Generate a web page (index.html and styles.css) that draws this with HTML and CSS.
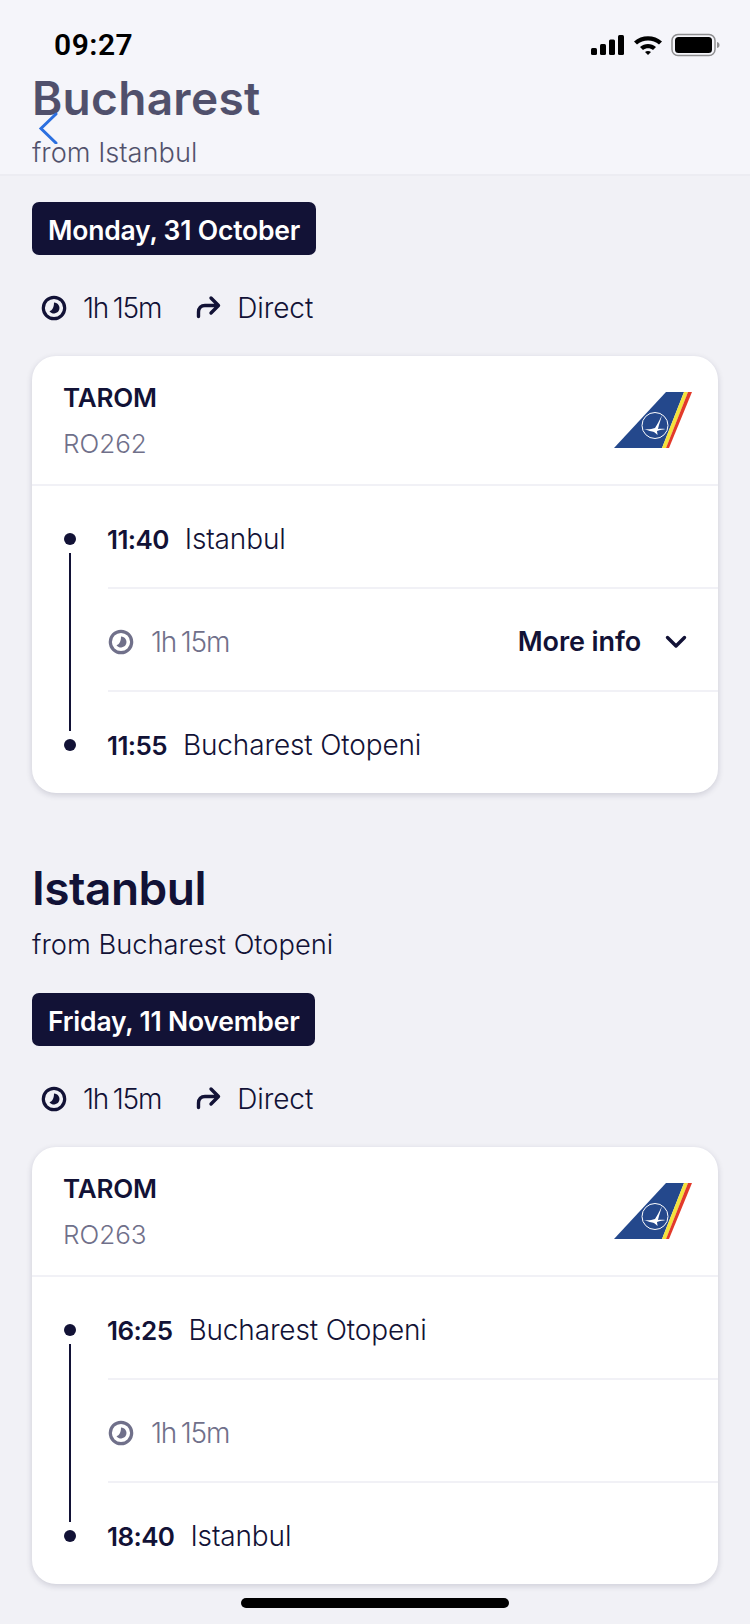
FILE: index.html
```html
<!DOCTYPE html>
<html lang="en">
<head>
<meta charset="utf-8">
<title>Flight details</title>
<link rel="stylesheet" href="styles.css">
</head>
<body>
<div class="screen">
  <header class="top">
    <div class="status">
      <span class="clock">09:27</span>
      <span class="status-icons">
        <svg width="34" height="22" viewBox="0 0 34 22"><rect x="0" y="14" width="6" height="7" rx="1.5"/><rect x="9" y="10" width="6" height="11" rx="1.5"/><rect x="18" y="5.500" width="6" height="15.500" rx="1.500"/><rect x="27" y="1" width="6" height="20" rx="1.500"/></svg>
        <svg width="30" height="22" viewBox="0 0 30 22"><path d="M1 7.500C8.500 .5 21.500 .5 29 7.500L26 10.500C20 5 10 5 4 10.500Z"/><path d="M7 13C11.500 9 18.500 9 23 13L20 16C17 13.500 13 13.500 10 16Z"/><path d="M12 18C13.800 16.600 16.200 16.600 18 18L15 21Z"/></svg>
        <svg width="49" height="24" viewBox="0 0 49 24"><rect x="1" y="1.500" width="43" height="21" rx="6" fill="none" stroke="#8e8e90" stroke-width="1.500"/><rect x="4" y="4" width="37" height="16" rx="3.500"/><path d="M46 9c2 .5 2.500 1.500 2.500 3s-.5 2.500-2.500 3z" fill="#8e8e90"/></svg>
      </span>
    </div>
    <svg class="back" width="20" height="32" viewBox="0 0 20 32"><path d="M18 2 3 16.500 18 31" fill="none" stroke="#2b6fe0" stroke-width="3" stroke-linecap="round"/></svg>
    <div class="top-title">
      <h1>Bucharest</h1>
      <p>from Istanbul</p>
    </div>
  </header>

  <main class="content">
    <section class="leg leg-first">
      <div class="date">Monday, 31 October</div>
      <div class="meta">
        <span class="meta-item">
          <svg width="26" height="26" viewBox="0 0 26 26"><use href="#clock-art"/></svg>
          <span class="dur">1h 15m</span>
        </span>
        <span class="meta-item">
          <svg width="26" height="26" viewBox="0 0 26 26"><use href="#turn-art"/></svg>
          Direct
        </span>
      </div>
      <article class="card">
        <div class="card-head">
          <div>
            <div class="airline">TAROM</div>
            <div class="flight-no">RO262</div>
          </div>
          <svg class="tail" width="78" height="56" viewBox="0 0 78 56"><use href="#tail-art"/></svg>
        </div>
        <div class="route">
          <div class="row stop"><span class="dot"></span><span class="line"></span><b>11:40</b><span>Istanbul</span></div>
          <div class="row mid">
            <svg width="26" height="26" viewBox="0 0 26 26"><use href="#clock-art"/></svg>
            <span class="dur mid-time">1h 15m</span>
            <span class="more">More info
              <svg width="22" height="14" viewBox="0 0 22 14"><path d="M2.500 2.500 11 11 19.500 2.500" fill="none" stroke="currentColor" stroke-width="3.400" stroke-linecap="round" stroke-linejoin="round"/></svg>
            </span>
          </div>
          <div class="row stop"><span class="dot"></span><b>11:55</b><span>Bucharest Otopeni</span></div>
        </div>
      </article>
    </section>

    <section class="leg leg-second">
      <h2>Istanbul</h2>
      <p class="from">from Bucharest Otopeni</p>
      <div class="date">Friday, 11 November</div>
      <div class="meta">
        <span class="meta-item">
          <svg width="26" height="26" viewBox="0 0 26 26"><use href="#clock-art"/></svg>
          <span class="dur">1h 15m</span>
        </span>
        <span class="meta-item">
          <svg width="26" height="26" viewBox="0 0 26 26"><use href="#turn-art"/></svg>
          Direct
        </span>
      </div>
      <article class="card">
        <div class="card-head">
          <div>
            <div class="airline">TAROM</div>
            <div class="flight-no">RO263</div>
          </div>
          <svg class="tail" width="78" height="56" viewBox="0 0 78 56"><use href="#tail-art"/></svg>
        </div>
        <div class="route">
          <div class="row stop"><span class="dot"></span><span class="line"></span><b>16:25</b><span>Bucharest Otopeni</span></div>
          <div class="row mid">
            <svg width="26" height="26" viewBox="0 0 26 26"><use href="#clock-art"/></svg>
            <span class="dur mid-time">1h 15m</span>
          </div>
          <div class="row stop"><span class="dot"></span><b>18:40</b><span>Istanbul</span></div>
        </div>
      </article>
    </section>
  </main>
  <div class="home-bar"></div>
</div>
<svg class="defs" width="0" height="0">
  <defs>
    <g id="clock-art">
      <circle cx="13" cy="13" r="10.700" fill="none" stroke="currentColor" stroke-width="3.200"/>
      <path d="M13 7.500A5.500 5.500 0 1 1 8.500 16.200C11.500 15.500 13 12 13 7.500Z" fill="currentColor"/>
    </g>
    <g id="turn-art">
      <path d="M3.500 21.500V17C3.500 13 6 10.500 10 10.500H23M16 3 23.500 10.500 16 18" fill="none" stroke="currentColor" stroke-width="3.400" stroke-linecap="round" stroke-linejoin="round"/>
    </g>
    <g id="tail-art">
      <path d="M0 56 52 0H70L48 56Z" fill="#24488c"/>
      <path d="M48 56 70 0H74L52 56Z" fill="#f4e23c"/>
      <path d="M52 56 74 0H78L55 56Z" fill="#e23a2a"/>
      <circle cx="41" cy="33.500" r="13" fill="none" stroke="#fff" stroke-width="1"/>
      <path d="M48 23C45 29 43 33 41 36C37 37.500 33 37.500 30 37C34 38.500 38 39.500 40 40C41.500 41 42.500 42 43.500 43C43.500 41 43 40 43 39C46 38 49 37.500 51.500 37C48 36.800 46 36.800 44 37C45 32 47 27 48 23Z" fill="#fff"/>
    </g>
  </defs>
</svg>
</body>
</html>
```
FILE: styles.css
```css
* { box-sizing: border-box; }
html, body { margin: 0; padding: 0; }
body { background: #f1f1f6; color: #121236; font-family: Inter, "Noto Sans", sans-serif; }
.screen { position: relative; width: 750px; height: 1624px; overflow: hidden; background: #f1f1f6; }
.defs { position: absolute; }

.top { position: relative; height: 176px; background: #f5f5fa; border-bottom: 2px solid #ececf2; padding: 0 32px; }
.status { display: flex; justify-content: space-between; align-items: center; height: 80px; padding: 4px 0 0 22px; }
.clock { font-family: Roboto, sans-serif; font-weight: 600; font-size: 30px; color: #000; letter-spacing: .5px; margin-top: 5px; }
.status-icons { display: flex; align-items: center; gap: 8px; margin: 5px -2px 0 0; }
.status-icons svg { fill: #000; display: block; }
.back { position: absolute; left: 38px; top: 112px; z-index: 1; }
.top-title { opacity: .72; margin-top: -8px; }
.top-title h1 { margin: 0; font-size: 46px; line-height: 52px; font-weight: 600; letter-spacing: .3px; }
.top-title p { margin: 14px 0 0; font-size: 27.200px; line-height: 30px; font-weight: 300; }

.content { padding: 0 32px; }
.leg-first { padding-top: 26px; }
.leg-second { padding-top: 65px; }
.leg h2 { margin: 0; font-size: 46px; line-height: 60px; font-weight: 600; letter-spacing: -.5px; }
.from { margin: 12px 0 33px; font-size: 27.300px; line-height: 30px; font-weight: 300; }
.date { display: inline-block; height: 53px; line-height: 56px; padding: 0 16px; border-radius: 7px; background: #121236; color: #fff; font-size: 26.500px; font-weight: 600; letter-spacing: -.2px; vertical-align: top; }
.meta { display: flex; gap: 34px; height: 53px; margin: 26px 0 22px; padding-left: 9px; align-items: center; }
.meta-item { display: flex; align-items: center; gap: 16px; font-size: 28px; font-weight: 300; letter-spacing: -.1px; }
.dur { font-size: 28px; letter-spacing: -1.200px; word-spacing: -2px; }

.card { background: #fff; border-radius: 24px; box-shadow: 0 2px 6px rgba(18,18,54,.16); overflow: hidden; width: 686px; }
.card-head { display: flex; justify-content: space-between; align-items: center; height: 130px; padding: 2px 26px 0 31px; border-bottom: 2px solid #f1f1f6; }
.airline { font-size: 26px; line-height: 30px; font-weight: 600; letter-spacing: -.2px; }
.flight-no { margin-top: 16px; font-size: 26px; line-height: 30px; font-weight: 300; color: #70708a; }
.tail { margin-top: -2px; }
.route { padding-left: 76px; }
.row { position: relative; display: flex; align-items: center; font-size: 28px; font-weight: 300; letter-spacing: -.15px; }
.stop { height: 101px; gap: 16px; padding-top: 5px; }
.stop b { margin-left: -1px; font-size: 26px; font-weight: 600; letter-spacing: -.6px; }
.mid { height: 105px; padding: 4px 31px 0 0; border-top: 2px solid #f1f1f6; border-bottom: 2px solid #f1f1f6; color: #70708a; }
.mid-time { margin-left: 17px; }
.more { margin-left: auto; display: flex; align-items: center; gap: 24px; color: #121236; font-size: 27px; font-weight: 600; letter-spacing: -.1px; }
.dot { position: absolute; left: -44px; top: 47px; width: 12px; height: 12px; border-radius: 50%; background: #121236; }
.line { position: absolute; left: -39px; top: 67px; width: 2px; height: 178px; background: #121236; }
.home-bar { position: absolute; left: 241px; bottom: 16px; width: 268px; height: 10px; border-radius: 5px; background: #000; }
```
